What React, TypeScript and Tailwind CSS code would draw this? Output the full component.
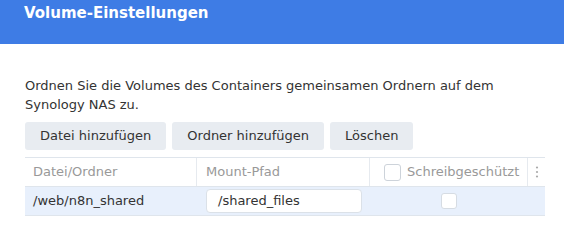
const App = () => {
	return (
		<div className="w-[564px] h-[246px] bg-white overflow-hidden text-[#333] font-['DejaVu_Sans',_Verdana,_sans-serif]">
			<header className="h-[44px] bg-[#3e7ce5] px-[24px] pt-[4px]">
				<div className="text-white font-bold text-[15px] leading-[18px]">Volume-Einstellungen</div>
			</header>
			<div className="px-[25px]">
				<p className="pt-[32px] text-[13px] leading-[19px] w-[500px]">
					Ordnen Sie die Volumes des Containers gemeinsamen Ordnern auf dem Synology NAS zu.
				</p>
				<div className="flex flex-row gap-[6px] mt-[8px]">
					<button className="h-[28px] px-[15px] rounded-[3px] bg-[#e8ecf1] text-[13px]">Datei hinzufügen</button>
					<button className="h-[28px] px-[15px] rounded-[3px] bg-[#e8ecf1] text-[13px]">Ordner hinzufügen</button>
					<button className="h-[28px] px-[15px] rounded-[3px] bg-[#e8ecf1] text-[13px]">Löschen</button>
				</div>
				<div className="mt-[7px] w-[520px] border-t border-[#dfe5ec] text-[13px]">
					<div className="grid grid-cols-[172px_173px_158px_17px] h-[29px] border-b border-[#dfe5ec] text-[#999]">
						<div className="flex items-center pl-[8px] border-r border-[#e6eaef]">Datei/Ordner</div>
						<div className="flex items-center pl-[9px] border-r border-[#e6eaef]">Mount-Pfad</div>
						<div className="flex items-center pl-[14px] gap-[6px] border-r border-[#e6eaef]">
							<span className="w-[17px] h-[17px] rounded-[3px] border border-[#cdd3da] bg-white"></span>
							<span>Schreibgeschützt</span>
						</div>
						<div className="flex items-center justify-center">
							<svg width="4" height="12" viewBox="0 0 4 12">
								<circle cx="2" cy="1.5" r="1.1" fill="#aaa" />
								<circle cx="2" cy="6" r="1.1" fill="#aaa" />
								<circle cx="2" cy="10.5" r="1.1" fill="#aaa" />
							</svg>
						</div>
					</div>
					<div className="grid grid-cols-[172px_173px_158px_17px] h-[29px] border-b border-[#dfe5ec] bg-[#e8f0fc]">
						<div className="flex items-center pl-[8px]">/web/n8n_shared</div>
						<div className="flex items-center pl-[9px]">
							<div className="w-[156px] h-[24px] bg-white border border-[#dbe1e8] rounded-[4px] flex items-center pl-[11px]">/shared_files</div>
						</div>
						<div className="flex items-center justify-center">
							<span className="w-[16px] h-[16px] rounded-[3px] border border-[#d6dce3] bg-white"></span>
						</div>
						<div></div>
					</div>
				</div>
			</div>
		</div>
	)
}

export default App
